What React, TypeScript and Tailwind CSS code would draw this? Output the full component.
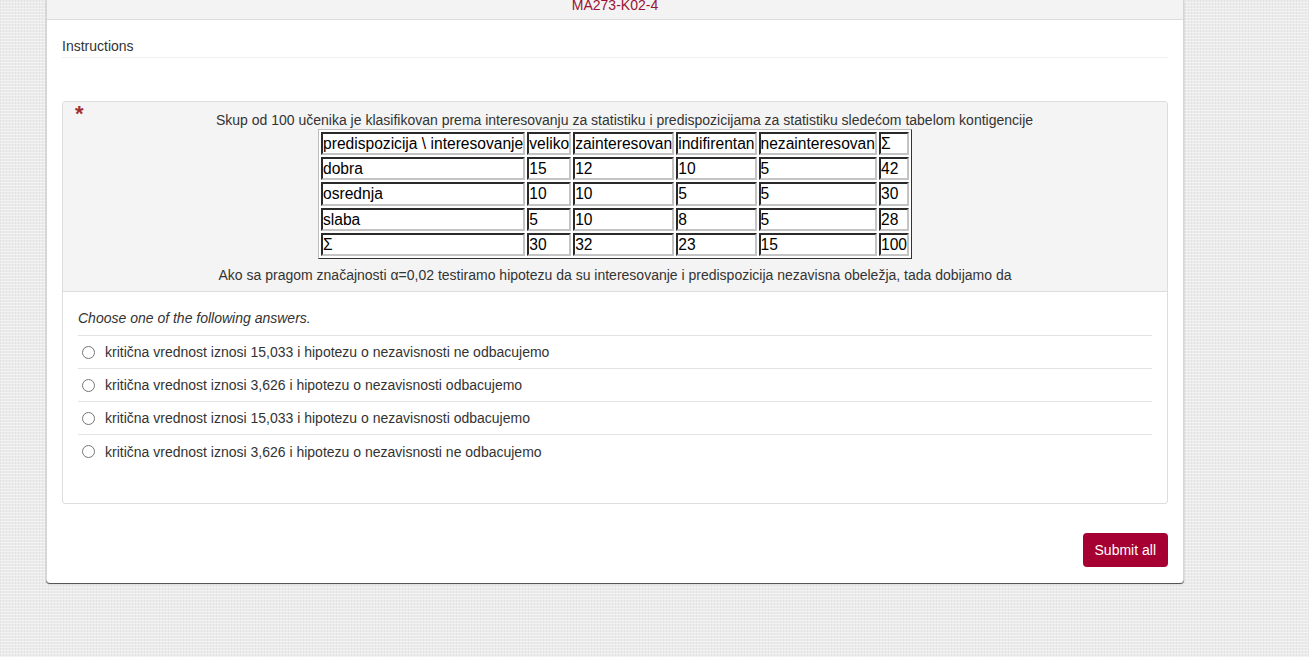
const rows: string[][] = [
  ["predispozicija \\ interesovanje", "veliko", "zainteresovan", "indifirentan", "nezainteresovan", "Σ"],
  ["dobra", "15", "12", "10", "5", "42"],
  ["osrednja", "10", "10", "5", "5", "30"],
  ["slaba", "5", "10", "8", "5", "28"],
  ["Σ", "30", "32", "23", "15", "100"],
];

const answers = [
  "kritična vrednost iznosi 15,033 i hipotezu o nezavisnosti ne odbacujemo",
  "kritična vrednost iznosi 3,626 i hipotezu o nezavisnosti odbacujemo",
  "kritična vrednost iznosi 15,033 i hipotezu o nezavisnosti odbacujemo",
  "kritična vrednost iznosi 3,626 i hipotezu o nezavisnosti ne odbacujemo",
];

export default function App() {
  return (
    <div
      className="min-h-[657px] bg-[#ebebeb] pb-[70px] text-[14px] text-[#333] [background-image:repeating-linear-gradient(0deg,rgba(255,255,255,.45)_0px,rgba(255,255,255,.45)_1px,transparent_1px,transparent_3px),repeating-linear-gradient(90deg,rgba(0,0,0,.035)_0px,rgba(0,0,0,.035)_1px,transparent_1px,transparent_3px)]"
      style={{ fontFamily: '"Liberation Sans", Arial, sans-serif' }}
    >
      <div className="ml-[46px] w-[1138px] overflow-hidden rounded-b-[4px] border-x border-[#d6d6d6] bg-white shadow-[0_1px_1px_rgba(0,0,0,0.7)]">
        {/* Header */}
        <div className="mt-[-20px] border-b border-[#dcdcdc] bg-[#f3f3f3] pb-[5px] pt-[16px] text-center leading-[18px] text-[#9b1133]">
          MA273-K02-4
        </div>

        <div className="px-[15px] pt-[16px] pb-[16px]">
          {/* Instructions */}
          <div className="border-b border-[#f0f0f0] pb-[1px] leading-[20px]">Instructions</div>

          {/* Question */}
          <div className="mt-[43px] overflow-hidden rounded-[3px] border border-[#dddddd]">
            <div className="relative border-b border-[#dddddd] bg-[#f4f4f4] px-[8px] pt-[9px] pb-[7px] text-center leading-[18px]">
              <span className="absolute left-[12px] top-[1px] text-[22px] font-bold leading-[22px] text-[#a33030]">*</span>
              <div className="pl-[19px]">
                Skup od 100 učenika je klasifikovan prema interesovanju za statistiku i predispozicijama za statistiku sledećom tabelom kontigencije
              </div>
              <table className="mx-auto border-separate border-spacing-[2px] border-[1px] border-t-[#bdbdbd] border-l-[#bdbdbd] border-r-[#333] border-b-[#333] bg-white text-left text-[15.6px] leading-[19.2px] text-black">
                <tbody>
                  {rows.map((row, i) => (
                    <tr key={i}>
                      {row.map((cell, j) => (
                        <td
                          key={j}
                          className="whitespace-nowrap border-2 border-t-[#2a2a2a] border-l-[#2a2a2a] border-r-[#c4c4c4] border-b-[#c4c4c4] px-0 py-0"
                        >
                          {cell}
                        </td>
                      ))}
                    </tr>
                  ))}
                </tbody>
              </table>
              <div className="mt-[7px]">
                Ako sa pragom značajnosti α=0,02 testiramo hipotezu da su interesovanje i predispozicija nezavisna obeležja, tada dobijamo da
              </div>
            </div>

            <div className="px-[15px] pt-[17px] pb-[35px]">
              <div className="border-b border-[#e3e3e3] pb-[8px] italic leading-[18px]">
                Choose one of the following answers.
              </div>
              {answers.map((a, i) => (
                <label
                  key={i}
                  className={`flex h-[33px] items-center ${i < answers.length - 1 ? "border-b border-[#e3e3e3]" : ""}`}
                >
                  <span className="ml-[4px] h-[13px] w-[13px] rounded-full border border-[#767676] bg-white" />
                  <span className="ml-[10px] leading-[18px]">{a}</span>
                </label>
              ))}
            </div>
          </div>

          {/* Submit */}
          <div className="mt-[29px] flex justify-end">
            <button className="h-[34px] rounded-[4px] bg-[#a60033] px-[12px] text-[14px] text-white">Submit all</button>
          </div>
        </div>
      </div>
    </div>
  );
}
